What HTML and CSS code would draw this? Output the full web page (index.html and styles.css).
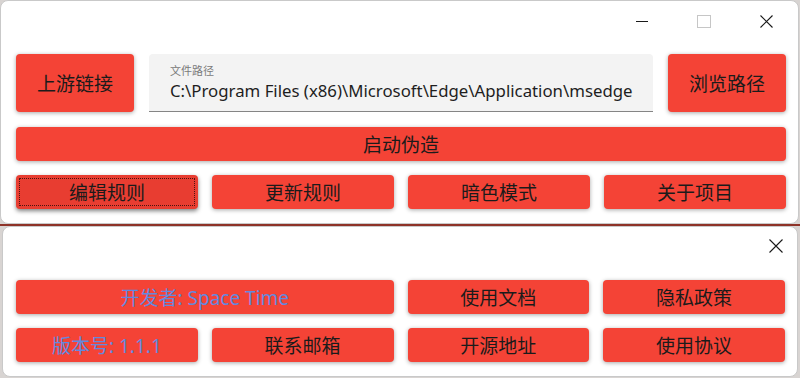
FILE: index.html
```html
<!DOCTYPE html>
<html lang="zh-CN">
<head>
    <meta charset="UTF-8">
    <meta name="viewport" content="width=device-width, initial-scale=1.0">
    <title>Edge 伪造</title>
    <link rel="stylesheet" href="styles.css">
</head>
<body>
    <div class="window main-window">
        <div class="title-bar">
            <span class="caption-btn minimize"><span class="dash"></span></span>
            <span class="caption-btn maximize"><span class="box"></span></span>
            <span class="caption-btn close">
                <svg width="13" height="13" viewBox="0 0 13 13"><path d="M0.5 0.5 L12.5 12.5 M12.5 0.5 L0.5 12.5" stroke="#1a1a1a" stroke-width="1.1" fill="none"/></svg>
            </span>
        </div>
        <div class="content">
            <div class="path-row">
                <button class="btn btn-tall">上游链接</button>
                <div class="path-field">
                    <span class="path-label">文件路径</span>
                    <span class="path-value">C:\Program Files (x86)\Microsoft\Edge\Application\msedge</span>
                </div>
                <button class="btn btn-tall">浏览路径</button>
            </div>
            <button class="btn btn-wide">启动伪造</button>
            <div class="btn-grid">
                <button class="btn focused">编辑规则</button>
                <button class="btn">更新规则</button>
                <button class="btn">暗色模式</button>
                <button class="btn">关于项目</button>
            </div>
        </div>
    </div>

    <div class="gap-strip"></div>

    <div class="window about-window">
        <div class="title-bar small">
            <span class="caption-btn close">
                <svg width="14" height="14" viewBox="0 0 14 14"><path d="M0.5 0.5 L13.5 13.5 M13.5 0.5 L0.5 13.5" stroke="#1a1a1a" stroke-width="1.1" fill="none"/></svg>
            </span>
        </div>
        <div class="content about-content">
            <div class="btn-grid">
                <button class="btn info span-2">开发者: Space Time</button>
                <button class="btn">使用文档</button>
                <button class="btn">隐私政策</button>
                <button class="btn info">版本号: 1.1.1</button>
                <button class="btn">联系邮箱</button>
                <button class="btn">开源地址</button>
                <button class="btn">使用协议</button>
            </div>
        </div>
    </div>
</body>
</html>
```

FILE: styles.css
```css
body {
    margin: 0;
    background-color: #d8d4d2;
    font-family: "Noto Sans", "Noto Sans CJK SC", sans-serif;
    overflow: hidden;
}

.window {
    background-color: white;
    border: 1px solid #c9c9c9;
    box-sizing: border-box;
}

.main-window {
    width: 799px;
    height: 224px;
    border-radius: 8px;
}

.gap-strip {
    height: 2px;
    background-color: #8e3328;
}

.about-window {
    width: 796px;
    height: 151px;
    margin-left: 2px;
    border-radius: 8px;
}

.title-bar {
    height: 40px;
    display: flex;
    justify-content: flex-end;
    align-items: center;
}

.title-bar.small {
    height: 38px;
}

.caption-btn {
    width: 62px;
    height: 40px;
    display: flex;
    align-items: center;
    justify-content: center;
}

.minimize .dash {
    width: 12px;
    height: 1px;
    background-color: #1a1a1a;
}

.maximize .box {
    width: 12px;
    height: 11px;
    border: 1px solid #c6c6c6;
}

.main-window .close {
    margin-right: 1px;
}

.about-window .close {
    width: 40px;
    height: 38px;
    margin-right: 1px;
}

.content {
    padding: 13px 12px 0 15px;
    display: flex;
    flex-direction: column;
    gap: 14px;
}

.about-content {
    padding-top: 15px;
    padding-left: 13px;
}

.btn {
    background-color: #f44336;
    color: #1b1b1b;
    border: none;
    border-radius: 4px;
    box-shadow: 0 1px 4px rgba(0, 0, 0, 0.35);
    font-family: "Noto Sans", "Noto Sans CJK SC", sans-serif;
    font-size: 19px;
    height: 34px;
    padding: 0;
    cursor: pointer;
}

.path-row {
    display: flex;
    gap: 15px;
    margin-bottom: 1px;
}

.btn-tall {
    width: 118px;
    height: 58px;
    flex-shrink: 0;
}

.btn-wide {
    width: 100%;
}

.path-field {
    flex: 1;
    background-color: #f3f3f3;
    border-bottom: 1px solid #858585;
    border-radius: 4px 4px 0 0;
    padding: 9px 21px 0;
    display: flex;
    flex-direction: column;
    box-sizing: border-box;
    height: 58px;
    overflow: hidden;
}

.path-label {
    font-size: 11px;
    color: #7a7a7a;
    line-height: 16px;
}

.path-value {
    font-size: 16.8px;
    color: #1e1e1e;
    line-height: 24px;
    white-space: nowrap;
}

.btn-grid {
    display: grid;
    grid-template-columns: repeat(4, 1fr);
    column-gap: 14px;
    row-gap: 14px;
}

.span-2 {
    grid-column: span 2;
}

.btn.info {
    color: #6489df;
}

.btn.focused {
    background-color: #e83d31;
    outline: 1px dotted #4a1410;
    outline-offset: -4px;
    box-shadow: 0 2px 4px rgba(0, 0, 0, 0.5);
}
```
